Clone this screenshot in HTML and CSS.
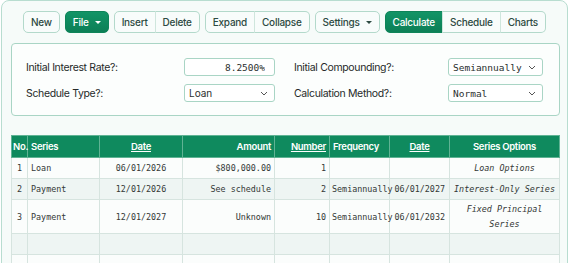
FILE: index.html
```html
<!DOCTYPE html>
<html>
<head>
  <meta charset="utf-8">
  <title>Loan Schedule</title>
  <link rel="stylesheet" href="styles.css">
</head>
<body>
  <div class="app">
    <div class="toolbar">
      <button class="btn">New</button>
      <button class="btn primary">File <span class="caret"></span></button>
      <div class="group">
        <button class="btn">Insert</button>
        <button class="btn">Delete</button>
      </div>
      <div class="group">
        <button class="btn">Expand</button>
        <button class="btn">Collapse</button>
      </div>
      <button class="btn">Settings <span class="caret"></span></button>
      <div class="group">
        <button class="btn primary">Calculate</button>
        <button class="btn">Schedule</button>
        <button class="btn">Charts</button>
      </div>
    </div>

    <div class="settings">
      <label>Initial Interest Rate?:</label>
      <input class="field num" type="text" value="8.2500%">
      <label class="right">Initial Compounding?:</label>
      <select class="field mono"><option>Semiannually</option></select>

      <label>Schedule Type?:</label>
      <select class="field"><option>Loan</option></select>
      <label class="right">Calculation Method?:</label>
      <select class="field mono"><option>Normal</option></select>
    </div>

    <table class="grid">
      <colgroup>
        <col style="width:16px"><col style="width:72px"><col style="width:83px"><col style="width:92px">
        <col style="width:55px"><col style="width:60px"><col style="width:60px"><col>
      </colgroup>
      <thead>
        <tr>
          <th class="l">No.</th>
          <th class="l">Series</th>
          <th class="c"><u>Date</u></th>
          <th class="r">Amount</th>
          <th class="r"><u>Number</u></th>
          <th class="l">Frequency</th>
          <th class="c"><u>Date</u></th>
          <th class="c">Series Options</th>
        </tr>
      </thead>
      <tbody>
        <tr>
          <td>1</td><td>Loan</td><td class="c">06/01/2026</td><td class="r">$800,000.00</td>
          <td class="r">1</td><td></td><td></td><td class="c opt">Loan Options</td>
        </tr>
        <tr>
          <td>2</td><td>Payment</td><td class="c">12/01/2026</td><td class="r">See schedule</td>
          <td class="r">2</td><td class="tight">Semiannually</td><td class="end">06/01/2027</td><td class="c opt">Interest-Only Series</td>
        </tr>
        <tr>
          <td>3</td><td>Payment</td><td class="c">12/01/2027</td><td class="r">Unknown</td>
          <td class="r">10</td><td class="tight">Semiannually</td><td class="end">06/01/2032</td><td class="c opt two">Fixed Principal<br>Series</td>
        </tr>
        <tr><td></td><td></td><td></td><td></td><td></td><td></td><td></td><td></td></tr>
        <tr><td></td><td></td><td></td><td></td><td></td><td></td><td></td><td></td></tr>
      </tbody>
    </table>
  </div>
</body>
</html>
```

FILE: styles.css
```css
body {
  margin: 0;
  font-family: Inter, 'Noto Sans', sans-serif;
  background: #ffffff;
  overflow: hidden;
}
.app {
  margin: 0 2px 0 1px;
  height: 300px;
  border: 1px solid #b8ddd0;
  border-radius: 8px;
  background: #f6fbf9;
  padding: 0 7px 0 9px;
}
.toolbar {
  display: flex;
  gap: 5px;
  padding: 10px 0 0 12px;
  height: 22px;
}
.group {
  display: flex;
}
.btn {
  height: 22px;
  padding: 0 7px;
  font-family: Inter, sans-serif;
  font-size: 10px;
  font-weight: 500;
  letter-spacing: -0.25px;
  color: #2d4a42;
  background: #f8fcfb;
  border: 1px solid #b3d9cb;
  border-radius: 5px;
  display: flex;
  align-items: center;
  gap: 6px;
  white-space: nowrap;
}
.group .btn {
  border-radius: 0;
}
.group .btn + .btn {
  border-left-color: #cfe6dd;
  margin-left: -1px;
}
.group .btn:first-child {
  border-radius: 5px 0 0 5px;
}
.group .btn:last-child {
  border-radius: 0 5px 5px 0;
}
.btn.primary {
  background: linear-gradient(180deg, #129466, #0c7f56);
  border-color: #0e8459;
  color: #ffffff;
}
.caret {
  width: 0;
  height: 0;
  border-left: 3px solid transparent;
  border-right: 3px solid transparent;
  border-top: 3px solid currentColor;
}
.settings {
  margin-top: 10px;
  height: 73px;
  box-sizing: border-box;
  border: 1px solid #a9d5c5;
  border-radius: 4px;
  background: #fcfefd;
  padding: 14px 15px 0 14px;
  display: grid;
  grid-template-columns: 158px 91px 173px 95px;
  align-content: start;
  row-gap: 8px;
  align-items: center;
}
.settings label {
  font-size: 10.5px;
  letter-spacing: -0.35px;
  color: #262a29;
}
.settings label.right {
  margin-left: 19px;
}
.field {
  box-sizing: border-box;
  height: 18px;
  width: 100%;
  border: 1px solid #a9d5c5;
  border-radius: 3px;
  background: #ffffff;
  color: #2b2f2e;
  font-family: Inter, sans-serif;
  font-size: 10px;
  padding: 0 5px;
}
.field.num {
  font-family: 'DejaVu Sans Mono', monospace;
  font-size: 9.5px;
  text-align: right;
  padding-right: 9px;
}
select.field {
  appearance: none;
  background-image: url("data:image/svg+xml,%3Csvg xmlns='http://www.w3.org/2000/svg' width='8' height='5' viewBox='0 0 8 5'%3E%3Cpath d='M1 1l3 3 3-3' fill='none' stroke='%23555' stroke-width='1'/%3E%3C/svg%3E");
  background-repeat: no-repeat;
  background-position: right 6px center;
  padding-left: 4px;
}
.field.mono {
  font-family: 'DejaVu Sans Mono', monospace;
  font-size: 9.5px;
}
.grid {
  margin-top: 19px;
  width: 549px;
  border-collapse: collapse;
  table-layout: fixed;
  background: #fbfdfc;
}
.grid th {
  background: #0f8a5e;
  color: #ffffff;
  font-size: 9.5px;
  font-weight: 600;
  letter-spacing: -0.3px;
  height: 21px;
  padding: 0 3px;
  border: 1px solid #5fb394;
  white-space: nowrap;
}
.grid th.l { text-align: left; }
.grid th.c { text-align: center; }
.grid th.r { text-align: right; }
.grid th:first-child { padding: 0 1px; }
.grid td {
  font-family: 'DejaVu Sans Mono', monospace;
  font-size: 8.4px;
  line-height: 12px;
  color: #333836;
  height: 20px;
  padding: 0 3px;
  border: 1px solid #d6e4df;
  white-space: nowrap;
}
.grid td:first-child { text-align: center; padding: 0; }
.grid td.c { text-align: center; }
.grid td.r { text-align: right; }
.grid td.tight { padding: 0 2px; }
.grid td.end { text-align: right; padding: 0 4px 0 0; }
.grid td.opt {
  font-style: italic;
  padding: 0 2px;
}
.grid td.two {
  line-height: 14.5px;
  padding: 2px 2px;
}
.grid tbody tr:nth-child(even) td {
  background: #eef5f3;
}
```
